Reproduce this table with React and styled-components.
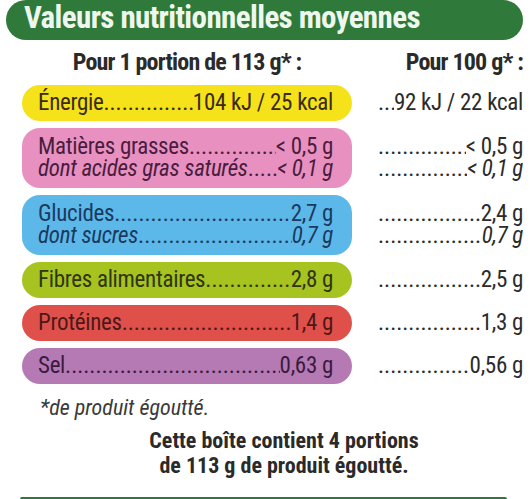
import React from 'react';
import styled, { createGlobalStyle } from 'styled-components';

const GlobalStyle = createGlobalStyle`
  html, body {
    margin: 0;
    padding: 0;
    background: #ffffff;
  }
  body {
    font-family: "Roboto Condensed", "Liberation Sans Narrow", "DejaVu Sans Condensed", Roboto, sans-serif;
    font-stretch: condensed;
  }
`;

const Page = styled.div`
  width: 530px;
  height: 499px;
  overflow: hidden;
  display: flex;
  flex-direction: column;
`;

const Header = styled.h1`
  margin: 0 7px 0 6px;
  height: 40px;
  border-radius: 20px;
  background: #2f7a3b;
  color: #eef7ee;
  font-size: 31px;
  font-weight: 700;
  letter-spacing: -0.6px;
  line-height: 34px;
  padding: 0 0 4px 18px;
  box-sizing: border-box;
  display: flex;
  align-items: center;
`;

const Columns = styled.div`
  display: grid;
  grid-template-columns: 330px minmax(0, 1fr);
  column-gap: 26px;
  padding: 0 7px 0 22px;
`;

const ColTitle = styled.div`
  font-size: 24px;
  font-weight: 700;
  letter-spacing: -0.8px;
  color: #2a2a2a;
  height: 45px;
  display: flex;
  align-items: center;
  justify-content: ${({ right }) => (right ? 'flex-end' : 'center')};
  padding-bottom: 2px;
  box-sizing: border-box;
`;

const Rows = styled.div`
  display: grid;
  grid-template-columns: 330px minmax(0, 1fr);
  column-gap: 26px;
  row-gap: 7px;
  padding: 0 7px 0 22px;
`;

const Pill = styled.div`
  background: ${({ bg }) => bg};
  color: ${({ fg }) => fg};
  border-radius: 18px;
  height: ${({ lines }) => (lines > 1 ? 60 : 36)}px;
  padding: 0 19px 0 16px;
  display: flex;
  flex-direction: column;
  justify-content: center;
  box-sizing: border-box;
  min-width: 0;
`;

const Side = styled.div`
  color: #2b2b2b;
  height: ${({ lines }) => (lines > 1 ? 60 : 36)}px;
  display: flex;
  flex-direction: column;
  justify-content: center;
  min-width: 0;
`;

const Line = styled.div`
  display: flex;
  align-items: baseline;
  font-size: 23px;
  letter-spacing: -0.3px;
  line-height: 22px;
  white-space: nowrap;
  font-style: ${({ sub }) => (sub ? 'italic' : 'normal')};
`;

const Leader = styled.span`
  flex: 1 1 0;
  min-width: 0;
  overflow: hidden;
  font-style: normal;
  letter-spacing: 0;

  &::after {
    content: '..............................................................................................................';
  }
`;

const Value = styled.span`
  flex: none;
`;

const Footnote = styled.div`
  font-size: 22px;
  font-style: italic;
  color: #3a3a3a;
  padding: 12px 0 0 40px;
  line-height: 24px;
`;

const BoxNote = styled.div`
  font-size: 22px;
  font-weight: 700;
  color: #2a2a2a;
  line-height: 25px;
  text-align: center;
  padding: 8px 0 0 38px;
`;

const FooterBar = styled.div`
  margin: auto 23px 0 20px;
  height: 2px;
  background: #2f7a3b;
  border-radius: 14px 14px 0 0;
`;

const nutrients = [
  {
    bg: '#f5e21b',
    fg: '#3b2a14',
    lines: [
      { label: 'Énergie', portion: '104 kJ / 25 kcal', per100: '92 kJ / 22 kcal' },
    ],
  },
  {
    bg: '#e891c0',
    fg: '#4a1c3f',
    lines: [
      { label: 'Matières grasses', portion: '< 0,5 g', per100: '< 0,5 g' },
      { label: 'dont acides gras saturés', portion: '< 0,1 g', per100: '< 0,1 g', sub: true },
    ],
  },
  {
    bg: '#5db8ea',
    fg: '#1a3a5e',
    lines: [
      { label: 'Glucides', portion: '2,7 g', per100: '2,4 g' },
      { label: 'dont sucres', portion: '0,7 g', per100: '0,7 g', sub: true },
    ],
  },
  {
    bg: '#a6c320',
    fg: '#2e3510',
    lines: [{ label: 'Fibres alimentaires', portion: '2,8 g', per100: '2,5 g' }],
  },
  {
    bg: '#e0504b',
    fg: '#4d1818',
    lines: [{ label: 'Protéines', portion: '1,4 g', per100: '1,3 g' }],
  },
  {
    bg: '#b57ab4',
    fg: '#3b1a40',
    lines: [{ label: 'Sel', portion: '0,63 g', per100: '0,56 g' }],
  },
];

const App = () => (
  <>
    <GlobalStyle />
    <Page>
      <Header>Valeurs nutritionnelles moyennes</Header>
      <Columns>
        <ColTitle>Pour 1 portion de 113 g* :</ColTitle>
        <ColTitle right>Pour 100 g* :</ColTitle>
      </Columns>
      <Rows>
        {nutrients.map((n) => (
          <React.Fragment key={n.lines[0].label}>
            <Pill bg={n.bg} fg={n.fg} lines={n.lines.length}>
              {n.lines.map((l) => (
                <Line key={l.label} sub={l.sub}>
                  <span>{l.label}</span>
                  <Leader />
                  <Value>{l.portion}</Value>
                </Line>
              ))}
            </Pill>
            <Side lines={n.lines.length}>
              {n.lines.map((l) => (
                <Line key={l.label} sub={l.sub}>
                  <Leader />
                  <Value>{l.per100}</Value>
                </Line>
              ))}
            </Side>
          </React.Fragment>
        ))}
      </Rows>
      <Footnote>*de produit égoutté.</Footnote>
      <BoxNote>
        Cette boîte contient 4 portions
        <br />
        de 113 g de produit égoutté.
      </BoxNote>
      <FooterBar />
    </Page>
  </>
);

export default App;
